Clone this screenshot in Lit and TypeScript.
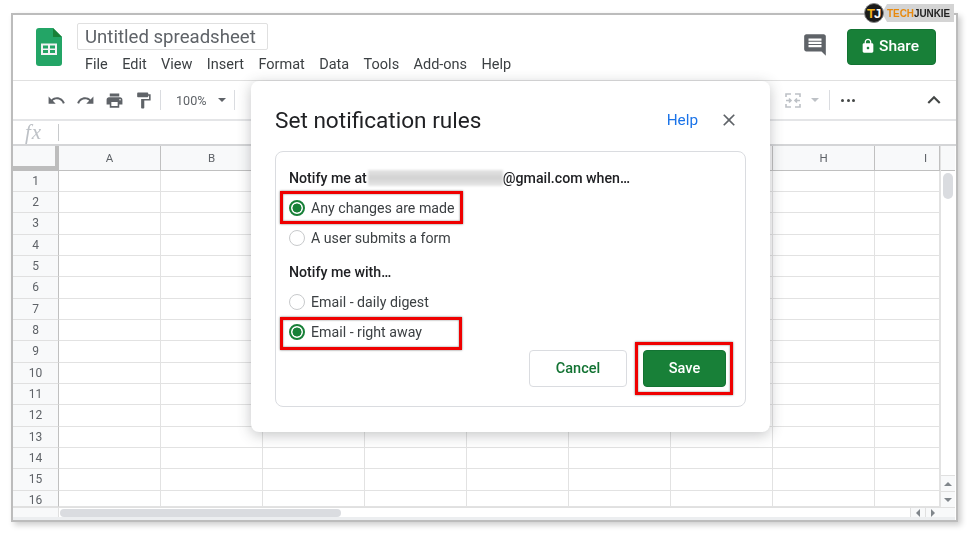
import { LitElement, html, css } from "lit";
import { customElement } from "lit/decorators.js";

const P = {
  undo: "M12.5 8c-2.65 0-5.05.99-6.9 2.6L2 7v9h9l-3.62-3.62c1.39-1.16 3.16-1.88 5.12-1.88 3.54 0 6.55 2.31 7.6 5.5l2.37-.78C21.08 11.03 17.15 8 12.5 8z",
  redo: "M18.4 10.6C16.55 8.99 14.15 8 11.5 8c-4.65 0-8.58 3.03-9.96 7.22L3.9 16c1.05-3.19 4.05-5.5 7.6-5.5 1.95 0 3.73.72 5.12 1.88L13 16h9V7l-3.6 3.6z",
  print: "M19 8H5c-1.66 0-3 1.34-3 3v6h4v4h12v-4h4v-6c0-1.66-1.34-3-3-3zm-3 11H8v-5h8v5zm3-7c-.55 0-1-.45-1-1s.45-1 1-1 1 .45 1 1-.45 1-1 1zm-1-9H6v4h12V3z",
  paint: "M18 4V3c0-.55-.45-1-1-1H5c-.55 0-1 .45-1 1v4c0 .55.45 1 1 1h12c.55 0 1-.45 1-1V6h1v4H9v11c0 .55.45 1 1 1h2c.55 0 1-.45 1-1v-9h8V4h-3z",
  comment: "M21.99 4c0-1.1-.89-2-1.99-2H4c-1.1 0-2 .9-2 2v12c0 1.1.9 2 2 2h14l4 4-.01-18zM18 14H6v-2h12v2zm0-3H6V9h12v2zm0-3H6V6h12v2z",
  lock: "M18 8h-1V6c0-2.76-2.24-5-5-5S7 3.24 7 6v2H6c-1.1 0-2 .9-2 2v10c0 1.1.9 2 2 2h12c1.1 0 2-.9 2-2V10c0-1.1-.9-2-2-2zm-6 9c-1.1 0-2-.9-2-2s.9-2 2-2 2 .9 2 2-.9 2-2 2zm3.1-9H8.9V6c0-1.71 1.39-3.1 3.1-3.1 1.71 0 3.1 1.39 3.1 3.1v2z",
  close: "M19 6.41 17.59 5 12 10.59 6.41 5 5 6.41 10.59 12 5 17.59 6.41 19 12 13.41 17.59 19 19 17.59 13.41 12z",
  up: "M12 8l-6 6 1.41 1.41L12 10.83l4.59 4.58L18 14z",
};

const icon = (d: string, cls: string) => html`<svg class=${cls} viewBox="0 0 24 24"><path d=${d}></path></svg>`;

const menu = ["File", "Edit", "View", "Insert", "Format", "Data", "Tools", "Add-ons", "Help"];
const cols = ["A", "B", "C", "D", "E", "F", "G", "H", "I"];
const rows = Array.from({ length: 16 }, (_, i) => i + 1);

@customElement("app-root")
export class AppRoot extends LitElement {
  static styles = css`
    :host {
      display: block;
      position: relative;
      width: 968px;
      height: 533px;
      box-sizing: border-box;
      padding: 13px 10px 11px 11px;
      background: #fff;
      overflow: hidden;
      font-family: Roboto, "Liberation Sans", sans-serif;
      color: #3c4043;
    }
    .win {
      height: 100%;
      box-sizing: border-box;
      border: 2px solid #bcbcbc;
      box-shadow: 3px 3px 6px rgba(0, 0, 0, 0.2);
      background: #fff;
      display: flex;
      flex-direction: column;
      filter: blur(0.3px);
    }
    .head {
      height: 65px;
      flex: none;
      display: flex;
      border-bottom: 1px solid #e0e0e0;
      padding-left: 23px;
    }
    .logo { width: 26px; height: 38px; margin-top: 13px; flex: none; }
    .titles { margin-left: 15px; padding-top: 8px; }
    .name {
      width: 191px;
      height: 27px;
      box-sizing: border-box;
      border: 1px solid #e0e0e0;
      border-radius: 2px;
      padding-left: 7px;
      font-size: 18.6px;
      line-height: 27px;
      color: #5f6368;
      white-space: nowrap;
    }
    .menu { display: flex; gap: 14.4px; margin: 6px 0 0 8px; font-size: 14.5px; line-height: 18px; color: #3c4043; }
    .spacer { flex: 1; }
    .cmt { width: 26px; height: 26px; fill: #5f6368; margin: 17px 19px 0 0; }
    .share {
      width: 89px;
      height: 36px;
      margin: 14px 20px 0 0;
      background: #188038;
      border: 1px solid #137333;
      box-sizing: border-box;
      border-radius: 4px;
      color: #fff;
      display: flex;
      align-items: center;
      padding: 0 0 2px 12px;
      gap: 3px;
      font-size: 15.5px;
      font-weight: 500;
    }
    .share svg { width: 16px; height: 16px; fill: #fff; }
    .bar {
      height: 38px;
      flex: none;
      display: flex;
      align-items: center;
      border-bottom: 2px solid #e4e5e7;
      padding-left: 34px;
    }
    .ti { width: 19px; height: 19px; fill: #5f6368; flex: none; margin-right: 10px; }
    .ti.k { width: 26px; height: 26px; fill: #444746; margin-right: 9px; }
    .sep { width: 1px; height: 20px; background: #dadce0; flex: none; }
    .sep.first { margin-left: -3px; }
    .sep.after { margin-left: 8px; }
    .sep.after2 { margin-left: 10px; }
    .zoom { font-size: 12.6px; color: #5f6368; margin: 0 12px 0 15px; }
    .caret { width: 0; height: 0; border: 4.5px solid transparent; border-top-color: #5f6368; border-bottom: 0; flex: none; }
    .caret.off { border-top-color: #bdc1c6; }
    .merge { width: 16px; height: 15px; flex: none; fill: none; stroke: #bdc1c6; stroke-width: 1.6; margin-right: 10px; }
    .dots { display: flex; gap: 2.5px; margin: 0 66px 0 11px; }
    .dots i { width: 3px; height: 3px; border-radius: 50%; background: #444746; }
    .fx {
      height: 23px;
      flex: none;
      display: flex;
      align-items: center;
      border-bottom: 2px solid #d4d5d7;
      padding-left: 12px;
    }
    .fx em { font: italic 21px "Liberation Serif", serif; letter-spacing: 1px; color: #bdc1c6; width: 33px; }
    .fx i { width: 1px; height: 17px; background: #c8cacc; }
    .sheet {
      flex: 1;
      min-height: 0;
      display: grid;
      grid-template-columns: 46px repeat(8, 102px) 65px 15px;
      grid-template-rows: 24.6px repeat(15, 21.33px) 16.7px 1fr;
      font-size: 11.5px;
      color: #5f6368;
    }
    .corner {
      background: #f8f9fa;
      border-right: 4px solid #bdbdbd;
      border-bottom: 5px solid #bdbdbd;
      box-sizing: border-box;
    }
    .ch {
      background: #f8f9fa;
      border-right: 1px solid #c0c0c0;
      border-bottom: 1px solid #c0c0c0;
      box-sizing: border-box;
      display: flex;
      align-items: center;
      justify-content: center;
    }
    .ch.cut { justify-content: flex-start; padding-left: 49px; }
    .rh {
      background: #f8f9fa;
      border-right: 1px solid #c0c0c0;
      border-bottom: 1px solid #e0e0e0;
      box-sizing: border-box;
      display: flex;
      align-items: center;
      justify-content: center;
      font-size: 12px;
    }
    .rh.cut { padding-top: 3px; }
    .c { border-right: 1px solid #e2e2e2; border-bottom: 1px solid #e2e2e2; box-sizing: border-box; }
    .vs {
      grid-column: 11;
      grid-row: 1 / span 17;
      background: #fff;
      border-left: 1px solid #e2e2e2;
      display: flex;
      flex-direction: column;
      align-items: center;
    }
    .vs .top { height: 24.6px; width: 100%; background: #f8f9fa; border-bottom: 1px solid #c0c0c0; box-sizing: border-box; flex: none; }
    .thumb-v { width: 10px; height: 26px; margin-top: 2px; border-radius: 5px; background: #dadce0; flex: none; }
    .arrow { width: 100%; height: 16px; flex: none; background: #f8f9fa; border-top: 1px solid #e0e0e0; display: flex; align-items: center; justify-content: center; box-sizing: border-box; }
    .vs .fill { flex: 1; }
    .tu { width: 0; height: 0; border: 4px solid transparent; border-top: 0; border-bottom: 4px solid #80868b; }
    .td { width: 0; height: 0; border: 4px solid transparent; border-bottom: 0; border-top: 4px solid #80868b; }
    .tl { width: 0; height: 0; border: 4px solid transparent; border-left: 0; border-right: 4px solid #80868b; }
    .tr { width: 0; height: 0; border: 4px solid transparent; border-right: 0; border-left: 4px solid #80868b; }
    .hs {
      grid-column: 1 / -1;
      background: #f8f9fa;
      display: flex;
      align-items: stretch;
      min-height: 0;
      border-top: 1px solid #e0e0e0;
      border-bottom: 3px solid #eceef0;
    }
    .hs .rcell { width: 46px; flex: none; border-right: 1px solid #e0e0e0; box-sizing: border-box; }
    .hs .track { flex: 1; padding: 1px 0 0 1px; background: #fff; }
    .thumb-h { width: 281px; height: 8px; border-radius: 4px; background: #dadce0; }
    .hs .ha { width: 15px; flex: none; border-left: 1px solid #e0e0e0; display: flex; align-items: center; justify-content: center; box-sizing: border-box; background: #f8f9fa; }
    .hs .end { width: 15px; flex: none; }

    .dialog {
      position: absolute;
      left: 251px;
      top: 81px;
      width: 519px;
      height: 351px;
      box-sizing: border-box;
      background: #fff;
      border-radius: 8px;
      box-shadow: 0 3px 14px rgba(60, 64, 67, 0.3);
      padding: 24px 24px 25px;
      display: flex;
      flex-direction: column;
      filter: blur(0.25px);
    }
    .dh { display: flex; align-items: center; height: 30px; }
    .dh h1 { margin: 0; font-size: 22.6px; font-weight: 400; color: #202124; flex: 1; }
    .help { font-size: 15.3px; color: #1a73e8; margin-right: 21px; }
    .x { width: 20px; height: 20px; fill: #5f6368; margin-right: 7px; }
    .panel {
      flex: 1;
      margin-top: 16px;
      border: 1px solid #dadce0;
      border-radius: 8px;
      padding: 17px 13px 0;
      position: relative;
      font-size: 14.5px;
    }
    .lbl { color: #202124; height: 18px; line-height: 18px; display: flex; align-items: center; font-weight: 500; font-size: 14.2px; white-space: nowrap; }
    .blurred { width: 135px; height: 16px; background: linear-gradient(#e4e4e4, #d2d2d2 50%, #e8e8e8); filter: blur(1px); margin: 0 0 0 1px; }
    .r { display: flex; align-items: center; height: 20px; color: #3c4043; gap: 6px; white-space: nowrap; font-size: 14.2px; }
    .r.a { margin-top: 11px; }
    .r.b { margin-top: 10px; }
    .lbl.two { margin-top: 15px; }
    .r.c2 { margin-top: 11px; }
    .dot { width: 16px; height: 16px; box-sizing: border-box; border-radius: 50%; border: 1.5px solid #c8cacc; flex: none; background: #fff; }
    .dot.on { border: 2px solid #188038; background: radial-gradient(circle, #188038 0 4.2px, #fff 4.8px); }
    .actions { position: absolute; right: 19px; bottom: 19px; display: flex; gap: 16px; }
    .btn { height: 37px; border-radius: 4px; box-sizing: border-box; display: flex; align-items: center; justify-content: center; font-size: 14.5px; font-weight: 500; }
    .cancel { width: 98px; border: 1px solid #dadce0; color: #137333; background: #fff; }
    .save { width: 83px; background: #188038; border: 1px solid #137333; color: #fff; }
    .mark { position: absolute; border: 3.5px solid #ef0000; box-sizing: border-box; box-shadow: 0 0 2px rgba(0,0,0,.55), inset 0 0 2px rgba(0,0,0,.55); }
    .m1 { left: 280px; top: 191px; width: 183px; height: 33px; }
    .m2 { left: 280px; top: 317px; width: 182px; height: 33px; }
    .m3 { left: 635px; top: 342px; width: 98px; height: 53px; }
    .tj {
      position: absolute;
      left: 864px;
      top: 3px;
      display: flex;
      align-items: center;
    }
    .tj .ban {
      width: 72px;
      height: 18px;
      margin-left: -2px;
      background: #d4d4d4;
      clip-path: polygon(0 50%, 5px 0, 100% 0, 100% 100%, 5px 100%);
      font: 700 11.5px/18px "Liberation Sans", sans-serif;
      padding-left: 5px;
      box-sizing: border-box;
      color: #222;
      white-space: nowrap;
    }
    .tj .ban span { display: inline-block; transform: scaleX(0.86); transform-origin: left; }
    .tj .ban b { color: #e8890c; }
    .tj svg { width: 20px; height: 20px; position: relative; z-index: 1; flex: none; }
    .tj text { font: 700 13px "Liberation Sans", sans-serif; }
  `;

  render() {
    return html`
      <div class="win">
        <div class="head">
          <svg class="logo" viewBox="0 0 26 38">
            <path d="M3 0H17L26 9V35a3 3 0 0 1-3 3H3a3 3 0 0 1-3-3V3a3 3 0 0 1 3-3z" fill="#23a566"></path>
            <path d="M17 0L26 9H17z" fill="#188038"></path>
            <path d="M5 15.500H21V27H5z" fill="#f1f3f4"></path>
            <path d="M7 17.500H12V20.500H7zM14 17.500H19V20.500H14zM7 22H12V25H7zM14 22H19V25H14z" fill="#23a566"></path>
          </svg>
          <div class="titles">
            <div class="name">Untitled spreadsheet</div>
            <div class="menu">${menu.map((m) => html`<span>${m}</span>`)}</div>
          </div>
          <div class="spacer"></div>
          ${icon(P.comment, "cmt")}
          <div class="share">${icon(P.lock, "")}<span>Share</span></div>
        </div>
        <div class="bar">
          ${icon(P.undo, "ti")}${icon(P.redo, "ti")}${icon(P.print, "ti")}${icon(P.paint, "ti")}
          <i class="sep first"></i>
          <span class="zoom">100%</span>
          <i class="caret"></i>
          <i class="sep after"></i>
          <div class="spacer"></div>
          <svg class="merge" viewBox="0 0 16 15">
            <path d="M1 4V1h5M10 1h5v3M1 11v3h5M10 14h5v-3M1 7.500h5M4 5.500l2 2-2 2M10 7.500h5M12 5.500l-2 2 2 2"></path>
          </svg>
          <i class="caret off"></i>
          <i class="sep after2"></i>
          <div class="dots"><i></i><i></i><i></i></div>
          ${icon(P.up, "ti k")}
        </div>
        <div class="fx"><em>fx</em><i></i></div>
        <div class="sheet">
          <div class="corner"></div>
          ${cols.map((c) => html`<div class="ch ${c === "I" ? "cut" : ""}">${c}</div>`)}
          <div class="vs">
            <div class="top"></div>
            <div class="thumb-v"></div>
            <div class="fill"></div>
            <div class="arrow"><i class="tu"></i></div>
            <div class="arrow"><i class="td"></i></div>
          </div>
          ${rows.map(
            (r) => html`<div class="rh ${r === 16 ? "cut" : ""}">${r}</div>${cols.map(() => html`<div class="c"></div>`)}`
          )}
          <div class="hs">
            <div class="rcell"></div>
            <div class="track"><div class="thumb-h"></div></div>
            <div class="ha"><i class="tl"></i></div>
            <div class="ha"><i class="tr"></i></div>
            <div class="end"></div>
          </div>
        </div>
      </div>

      <div class="dialog">
        <div class="dh">
          <h1>Set notification rules</h1>
          <span class="help">Help</span>
          ${icon(P.close, "x")}
        </div>
        <div class="panel">
          <div class="lbl">Notify me at<span class="blurred"></span>@gmail.com when…</div>
          <div class="r a"><span class="dot on"></span>Any changes are made</div>
          <div class="r b"><span class="dot"></span>A user submits a form</div>
          <div class="lbl two">Notify me with…</div>
          <div class="r c2"><span class="dot"></span>Email - daily digest</div>
          <div class="r b"><span class="dot on"></span>Email - right away</div>
          <div class="actions">
            <div class="btn cancel">Cancel</div>
            <div class="btn save">Save</div>
          </div>
        </div>
      </div>

      <div class="mark m1"></div>
      <div class="mark m2"></div>
      <div class="mark m3"></div>

      <div class="tj">
        <svg viewBox="0 0 20 20">
          <circle cx="10" cy="10" r="9.500" fill="#1a1a1a" stroke="#888" stroke-width="1"></circle>
          <text x="3" y="15" fill="#f5b21a">T</text>
          <text x="10" y="15" fill="#fff">J</text>
        </svg>
        <div class="ban"><span><b>TECH</b>JUNKIE</span></div>
      </div>
    `;
  }
}
